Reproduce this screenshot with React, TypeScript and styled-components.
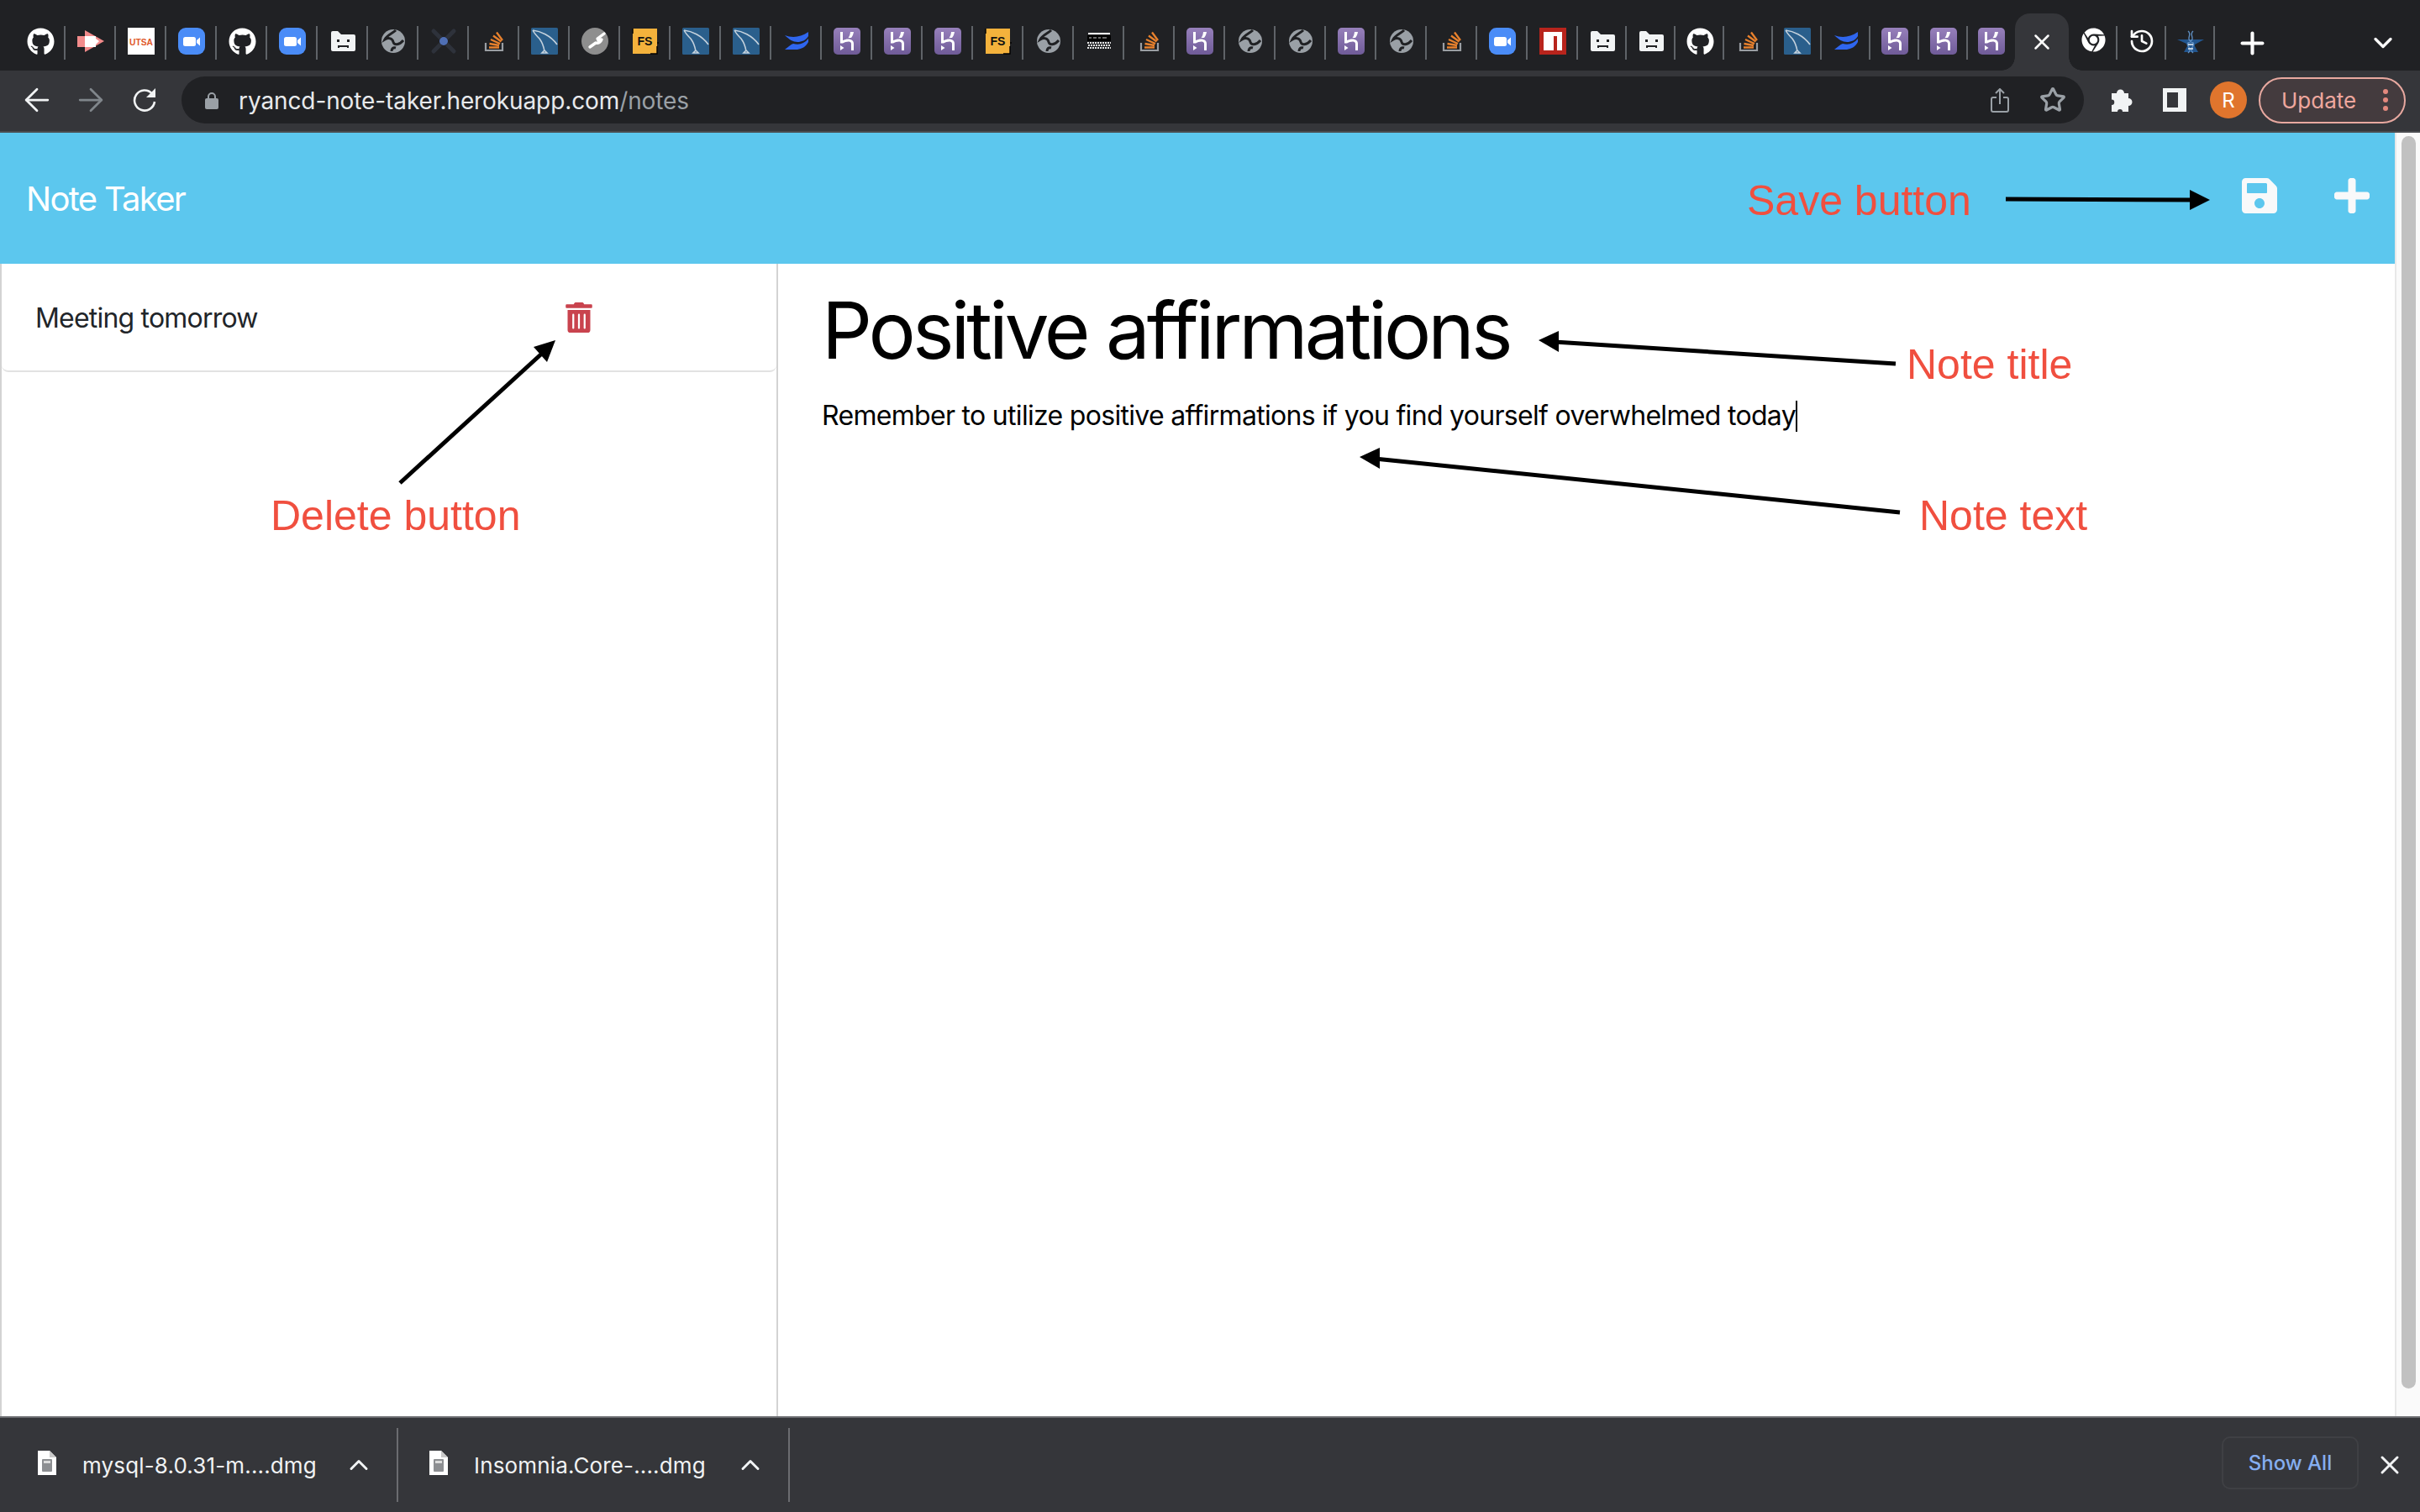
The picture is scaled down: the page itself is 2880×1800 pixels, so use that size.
import React from "react";
import styled, { createGlobalStyle } from "styled-components";
import { ArrowLeft, ArrowRight, ChevronDown, ChevronUp, History, Plus, Star, X } from "lucide-react";
import { FaChrome, FaGithub, FaPlus, FaSave, FaTrashAlt } from "react-icons/fa";

const GlobalStyle = createGlobalStyle`
  html, body {
    margin: 0;
    padding: 0;
    background: #fff;
  }
  body {
    font-family: Inter, "Liberation Sans", sans-serif;
    overflow: hidden;
  }
`;

const Fav = ({ children }: { children: React.ReactNode }) => (
  <svg width="32" height="32" viewBox="0 0 32 32">
    {children}
  </svg>
);

const Github = () => <FaGithub size={33} color="#fff" />;

const ArrowFav = () => (
  <Fav>
    <rect x="0" y="10" width="12" height="13" fill="#f28b8b" />
    <polygon points="9,3 32,16 9,29" fill="#f28b8b" />
    <rect x="9" y="10" width="13" height="13" fill="#fff" />
    <polygon points="22,13 26,16 22,20" fill="#fff" />
  </Fav>
);

const Utsa = () => (
  <Fav>
    <rect width="32" height="32" fill="#fff" />
    <text x="16" y="20.5" textAnchor="middle" fontFamily="Liberation Sans" fontWeight="700" fontSize="11.5" textLength="28" lengthAdjust="spacingAndGlyphs" fill="#e0592a">
      UTSA
    </text>
  </Fav>
);

const Zoom = () => (
  <Fav>
    <rect width="32" height="32" rx="9" fill="#4a8cf7" />
    <rect x="6" y="11" width="15" height="11" rx="2.5" fill="#fff" />
    <polygon points="22,15 26,11.5 26,21.5 22,18" fill="#fff" />
  </Fav>
);

const Sad = () => (
  <Fav>
    <path d="M2 6a2 2 0 0 1 2-2h6l4 4h15a2 2 0 0 1 2 2v16a2 2 0 0 1-2 2H4a2 2 0 0 1-2-2z" fill="#f1f3f4" />
    <rect x="9" y="14" width="3" height="3" fill="#202124" />
    <rect x="21" y="14" width="3" height="3" fill="#202124" />
    <path d="M11 24v-2h11v2" fill="none" stroke="#202124" strokeWidth="2" />
  </Fav>
);

const Globe = () => (
  <Fav>
    <circle cx="16" cy="16" r="14" fill="#9aa0a6" />
    <path d="M19 3C15 7 9 8 6 14c5-3 9-1 10 3 1 4 7 4 12-2M14 28c0-3 2-5 5-4" fill="none" stroke="#202124" strokeWidth="3" />
  </Fav>
);

const XDot = () => (
  <Fav>
    <path d="M4 4L28 28M28 4L4 28" stroke="#2e323b" strokeWidth="5" strokeLinecap="round" />
    <circle cx="16" cy="16" r="5.5" fill="#202124" />
    <circle cx="16" cy="16" r="5" fill="#4f6fb5" />
  </Fav>
);

const Stack = () => (
  <Fav>
    <path d="M6 19v9h20v-9" transform="translate(0 -1)" fill="none" stroke="#9a9ea3" strokeWidth="2.2" />
    <path d="M10 23.5h12M10.5 19l11.5 2M12 14l11 5M15 9.5l9.5 7M19 5.5l7 9.5" stroke="#e8812d" strokeWidth="2.3" fill="none" />
  </Fav>
);

const Mysql = () => (
  <Fav>
    <rect width="32" height="32" rx="1.5" fill="#2a5f8c" />
    <path d="M2 3c9 1 21 6 29 17M2 3c2 4 6 8 8 10 3 4 5 9 6 15M16 27l3 3h-6z" fill="none" stroke="#c5d2dd" strokeWidth="1.6" />
  </Fav>
);

const Wrench = () => (
  <Fav>
    <circle cx="16" cy="16" r="16" fill="#8e8e8e" />
    <path d="M10 23l7-5c3 1 6-1 7-4l-4 1-1-2 8-6" fill="none" stroke="#fff" strokeWidth="3.4" strokeLinecap="round" strokeLinejoin="round" />
  </Fav>
);

const Fs = () => (
  <Fav>
    <rect x="1" y="1" width="29" height="30" fill="#f4b23c" />
    <path d="M1 1v6M31 17v2M30 22v9h-8" stroke="#000" strokeWidth="1.4" fill="none" />
    <text x="15.5" y="21" textAnchor="middle" fontFamily="Liberation Sans" fontWeight="700" fontSize="14" fill="#111">
      FS
    </text>
  </Fav>
);

const Wave = () => (
  <Fav>
    <path d="M2 9c8 3 18 3 28-4v5c-3 5-8 7-13 7-5 0-10-3-15-8z" fill="#2f66ef" />
    <path d="M30 13v4c-3 6-8 8-13 9H2c4-3 7-6 10-7 7 2 13 0 18-6z" fill="#2f66ef" />
  </Fav>
);

const Heroku = () => (
  <Fav>
    <defs>
      <linearGradient id="her" x1="0" y1="0" x2="0" y2="1">
        <stop offset="0" stopColor="#9780bb" />
        <stop offset="1" stopColor="#6f5b98" />
      </linearGradient>
    </defs>
    <rect width="32" height="32" rx="5" fill="url(#her)" />
    <path d="M8 5h3v10c3-1 6-2 9-1 3 .5 4 3 4 5v8h-3v-8c0-1-.5-2-2-2.300-2.500-.4-6 .8-8 1.800H8z" fill="#fff" />
    <path d="M20 5h4c-.5 3-1.500 5-3 7h-3.500c1.500-2 2.200-4 2.500-7z" fill="#fff" />
    <path d="M8 21l4.500 3L8 27z" fill="#fff" />
  </Fav>
);

const Pixel = () => (
  <Fav>
    <rect x="3" y="6" width="26" height="2" fill="#fff" />
    <rect x="2" y="9" width="28" height="7" fill="#000" />
    <path d="M4 12h3M9 12h4M15 12h3M20 12h5" stroke="#888" strokeWidth="1.5" />
    <path d="M2 18h28M3 21h26M2 24h28" stroke="#e6e6e6" strokeWidth="2" strokeDasharray="2 1" />
  </Fav>
);

const Npm = () => (
  <Fav>
    <rect width="32" height="32" fill="#b8241c" />
    <rect x="5" y="5" width="22" height="22" fill="#fff" />
    <rect x="11" y="9" width="12" height="18" fill="#fff" />
    <rect x="17" y="10" width="4" height="17" fill="#b8241c" />
    <rect x="5" y="5" width="22" height="3" fill="#fff" />
  </Fav>
);

const Anvil = () => (
  <Fav>
    <polygon points="0,14 32,14 21,20 21,22 25,29 8,29 12,22 11,19" fill="#23568f" />
    <path d="M13 4c6 5-5 9 6 14 3 3-6 7 0 12M19 4c-6 5 5 9-6 14-3 3 6 7 0 12" fill="none" stroke="#5f8fc2" strokeWidth="1.4" />
    <path d="M13 20h6M13 25h6" stroke="#e6eef6" strokeWidth="1.4" />
  </Fav>
);

type TabDef = { icon: React.ComponentType; width: number; sep?: boolean };

const wide = (icon: React.ComponentType): TabDef => ({ icon, width: 60, sep: true });
const slim = (icon: React.ComponentType): TabDef => ({ icon, width: 58, sep: true });

const leftTabs: TabDef[] = [
  wide(Github), wide(ArrowFav), wide(Utsa), wide(Zoom), wide(Github), wide(Zoom), wide(Sad), wide(Globe),
  wide(XDot), wide(Stack), wide(Mysql), wide(Wrench), wide(Fs), wide(Mysql), wide(Mysql), wide(Wave),
  wide(Heroku), wide(Heroku), wide(Heroku), wide(Fs), wide(Globe), wide(Pixel), wide(Stack), wide(Heroku),
  wide(Globe), wide(Globe), wide(Heroku), wide(Globe), wide(Stack), wide(Zoom), wide(Npm),
  slim(Sad), slim(Sad), slim(Github), slim(Stack), slim(Mysql), slim(Wave), slim(Heroku), slim(Heroku),
  { icon: Heroku, width: 56 },
];

const ChromeFav = () => <FaChrome size={29} color="#fff" />;
const HistoryFav = () => <History size={32} color="#fff" strokeWidth={2} />;

const rightTabs: TabDef[] = [slim(ChromeFav), slim(HistoryFav), slim(Anvil)];

const App = () => {
  return (
    <Frame>
      <GlobalStyle />
      <TabStrip>
        {leftTabs.map((t, i) => (
          <Tab key={i} $width={t.width} $sep={!!t.sep}>
            <t.icon />
          </Tab>
        ))}
        <ActiveTab>
          <X size={30} color="#fff" strokeWidth={2} />
        </ActiveTab>
        {rightTabs.map((t, i) => (
          <Tab key={i} $width={t.width} $sep={!!t.sep}>
            <t.icon />
          </Tab>
        ))}
        <NewTab>
          <Plus size={41} color="#fff" strokeWidth={2.4} />
        </NewTab>
        <TabMenu>
          <ChevronDown size={36} color="#fff" strokeWidth={2.2} />
        </TabMenu>
      </TabStrip>

      <Toolbar>
        <ToolButton>
          <ArrowLeft size={44} color="#f1f3f4" strokeWidth={1.5} />
        </ToolButton>
        <ToolButton>
          <ArrowRight size={44} color="#80868b" strokeWidth={1.5} />
        </ToolButton>
        <ToolButton>
          <svg width="28" height="28" viewBox="0 0 28 28">
            <path d="M23 6.500A12 12 0 1 0 26 16" fill="none" stroke="#f1f3f4" strokeWidth="2.600" />
            <polygon points="27,0 27,11 16,11" fill="#f1f3f4" />
          </svg>
        </ToolButton>
        <Omnibox>
          <svg width="16" height="21" viewBox="0 0 16 21">
            <path d="M4 9V6a4 4 0 0 1 8 0v3" fill="none" stroke="#9aa0a6" strokeWidth="2" />
            <rect y="8" width="16" height="13" rx="2" fill="#9aa0a6" />
          </svg>
          <Url>
            ryancd-note-taker.herokuapp.com<UrlPath>/notes</UrlPath>
          </Url>
          <OmniActions>
            <svg width="22" height="29" viewBox="0 0 22 29">
              <path d="M7 11H3a2 2 0 0 0-2 2v13a2 2 0 0 0 2 2h16a2 2 0 0 0 2-2V13a2 2 0 0 0-2-2h-4M11 19V2M6 6l5-5 5 5" fill="none" stroke="#9aa0a6" strokeWidth="2" />
            </svg>
            <Star size={32} color="#9aa0a6" strokeWidth={2.4} />
          </OmniActions>
        </Omnibox>
        <ToolButton>
          <svg width="29" height="29" viewBox="0 0 29 29">
            <path d="M3 6h6a4.500 4.500 0 0 1 9 0h5v6a4.500 4.500 0 0 1 0 9v7h-7a3 3 0 0 0-6 0H3v-8a3.200 3.200 0 0 0 0-6.500z" fill="#f1f3f4" />
          </svg>
        </ToolButton>
        <ToolButton>
          <svg width="28" height="28" viewBox="0 0 28 28">
            <rect width="28" height="28" fill="#f1f3f4" />
            <rect x="5" y="5" width="13" height="18" fill="#35363a" />
          </svg>
        </ToolButton>
        <ToolButton>
          <Avatar>R</Avatar>
        </ToolButton>
        <UpdatePill>
          Update
          <UpdateDots>
            <i />
            <i />
            <i />
          </UpdateDots>
        </UpdatePill>
      </Toolbar>

      <Viewport>
        <Page>
          <Navbar>
            <Brand>Note Taker</Brand>
            <NavIcons>
              <FaSave size={48} />
              <FaPlus size={48} />
            </NavIcons>
          </Navbar>
          <Columns>
            <Sidebar>
              <NoteCard>
                <NoteName>Meeting tomorrow</NoteName>
                <FaTrashAlt size={36} color="#c9434e" />
              </NoteCard>
            </Sidebar>
            <Editor>
              <NoteTitle>Positive affirmations</NoteTitle>
              <NoteText>
                Remember to utilize positive affirmations if you find yourself overwhelmed today
                <Caret />
              </NoteText>
            </Editor>
          </Columns>
        </Page>
        <Scrollbar>
          <Thumb />
        </Scrollbar>
      </Viewport>

      <DownloadBar>
        <DownloadItem>
          <FileIcon />
          <FileName>mysql-8.0.31-m....dmg</FileName>
          <ChevronUp size={36} color="#f1f3f4" strokeWidth={2} />
        </DownloadItem>
        <DownloadItem>
          <FileIcon />
          <FileName>Insomnia.Core-....dmg</FileName>
          <ChevronUp size={36} color="#f1f3f4" strokeWidth={2} />
        </DownloadItem>
        <ShowAll>Show All</ShowAll>
        <CloseBar>
          <X size={36} color="#f1f3f4" strokeWidth={2} />
        </CloseBar>
      </DownloadBar>

      <Arrows viewBox="0 0 2880 1800">
        <path d="M2387 237L2610 238" stroke="#000" strokeWidth="5" />
        <polygon points="2630,238 2606,226 2606,250" fill="#000" />
        <path d="M476 575L648 418" stroke="#000" strokeWidth="5" />
        <polygon points="661,405 635,413 651,431" fill="#000" />
        <path d="M2256 433L1850 407" stroke="#000" strokeWidth="5" />
        <polygon points="1831,405 1855,394 1855,419" fill="#000" />
        <path d="M2261 610L1636 546" stroke="#000" strokeWidth="5" />
        <polygon points="1618,544 1642,533 1642,558" fill="#000" />
      </Arrows>
      <Callout $x={2079} $y={214}>Save button</Callout>
      <Callout $x={2269} $y={409}>Note title</Callout>
      <Callout $x={2284} $y={589}>Note text</Callout>
      <Callout $x={322} $y={589}>Delete button</Callout>
    </Frame>
  );
};

const FileIcon = () => (
  <FileGlyph width="22" height="29" viewBox="0 0 22 29">
    <path d="M0 0h14l8 8v21H0z" fill="#fff" />
    <path d="M14 0v8h8z" fill="#c9c9c9" />
    <rect x="5" y="10" width="12" height="15" rx="1" fill="#8d8f92" />
    <rect x="7" y="12" width="8" height="3" fill="#dcdcdc" />
  </FileGlyph>
);

const Frame = styled.div`
  position: relative;
  width: 2880px;
  height: 1800px;
  display: flex;
  flex-direction: column;
  overflow: hidden;
`;

const TabStrip = styled.div`
  height: 84px;
  flex: none;
  box-sizing: border-box;
  padding: 31px 0 0 18px;
  display: flex;
  align-items: flex-start;
  background: #202124;
`;

const Tab = styled.div<{ $width: number; $sep: boolean }>`
  width: ${(p) => p.$width}px;
  height: 40px;
  flex: none;
  box-sizing: border-box;
  padding: 2px 0 0 2px;
  display: flex;
  justify-content: center;
  align-items: flex-start;
  border-right: 2px solid ${(p) => (p.$sep ? "#5f6368" : "transparent")};
`;

const ActiveTab = styled.div`
  position: relative;
  width: 64px;
  height: 68px;
  margin-top: -15px;
  flex: none;
  display: flex;
  justify-content: center;
  padding-top: 19px;
  box-sizing: border-box;
  background: #35363a;
  border-radius: 18px 18px 0 0;

  &::before,
  &::after {
    content: "";
    position: absolute;
    bottom: 0;
    width: 16px;
    height: 16px;
  }
  &::before {
    left: -16px;
    background: radial-gradient(circle at 0 0, transparent 15.500px, #35363a 16px);
  }
  &::after {
    right: -16px;
    background: radial-gradient(circle at 100% 0, transparent 15.500px, #35363a 16px);
  }
`;

const NewTab = styled.div`
  width: 88px;
  height: 40px;
  flex: none;
  display: flex;
  justify-content: center;
  align-items: center;
`;

const TabMenu = styled.div`
  margin-left: auto;
  margin-right: 26px;
  height: 40px;
  display: flex;
  align-items: center;
`;

const Toolbar = styled.div`
  height: 74px;
  flex: none;
  box-sizing: border-box;
  padding: 0 17px 2px 12px;
  display: flex;
  align-items: center;
  background: #35363a;
  border-bottom: 2px solid #4b4c50;
`;

const ToolButton = styled.div`
  width: 64px;
  height: 56px;
  flex: none;
  display: flex;
  justify-content: center;
  align-items: center;
`;

const Omnibox = styled.div`
  flex: 1;
  height: 56px;
  margin: 0 12px;
  box-sizing: border-box;
  padding: 0 21px 0 28px;
  display: flex;
  align-items: center;
  border-radius: 28px;
  background: #202124;
`;

const Url = styled.div`
  margin-left: 24px;
  padding-top: 2px;
  font-size: 28px;
  letter-spacing: -0.1px;
  color: #e8eaed;
`;

const UrlPath = styled.span`
  color: #9aa0a6;
`;

const OmniActions = styled.div`
  margin-left: auto;
  display: flex;
  align-items: center;
  gap: 36px;
`;

const Avatar = styled.div`
  width: 44px;
  height: 44px;
  border-radius: 50%;
  display: flex;
  justify-content: center;
  align-items: center;
  background: #e0752d;
  color: #fff;
  font-size: 24px;
`;

const UpdatePill = styled.div`
  width: 175px;
  height: 55px;
  margin-left: 4px;
  box-sizing: border-box;
  padding-left: 25px;
  display: flex;
  align-items: center;
  border: 2px solid #e8a9a0;
  border-radius: 28px;
  background: #443b3e;
  color: #efa79e;
  font-size: 26px;
`;

const UpdateDots = styled.div`
  margin-left: 32px;
  display: flex;
  flex-direction: column;
  gap: 4px;

  i {
    width: 6px;
    height: 6px;
    border-radius: 50%;
    background: #e4897e;
  }
`;

const Viewport = styled.div`
  flex: 1;
  min-height: 0;
  display: flex;
`;

const Page = styled.div`
  flex: 1;
  display: flex;
  flex-direction: column;
  background: #fff;
`;

const Navbar = styled.div`
  height: 156px;
  flex: none;
  box-sizing: border-box;
  padding: 0 27px 0 31px;
  display: flex;
  justify-content: space-between;
  align-items: center;
  background: #5cc7ee;
`;

const Brand = styled.div`
  font-size: 40px;
  letter-spacing: -1.7px;
  color: #fff;
`;

const NavIcons = styled.div`
  display: flex;
  gap: 62px;
  padding-bottom: 6px;
  color: #f8f9fa;
`;

const Columns = styled.div`
  flex: 1;
  display: flex;
`;

const Sidebar = styled.div`
  width: 926px;
  flex: none;
  box-sizing: border-box;
  border-left: 2px solid #d3d3d3;
  border-right: 2px solid #d3d3d3;
`;

const NoteCard = styled.div`
  height: 129px;
  box-sizing: border-box;
  padding-left: 40px;
  display: flex;
  align-items: center;
  border-bottom: 2px solid #e2e2e2;
  border-radius: 0 0 8px 8px;
`;

const NoteName = styled.div`
  width: 629px;
  padding-top: 2px;
  font-size: 32px;
  letter-spacing: -0.8px;
  color: #212529;
`;

const Editor = styled.div`
  flex: 1;
  padding: 23px 0 0 52px;
`;

const NoteTitle = styled.h1`
  margin: 0 0 21px;
  font-size: 94px;
  font-weight: 400;
  line-height: 113px;
  letter-spacing: -4px;
  color: #000;
`;

const NoteText = styled.div`
  font-size: 32px;
  line-height: 48px;
  letter-spacing: -0.69px;
  color: #000;
`;

const Caret = styled.span`
  display: inline-block;
  width: 2px;
  height: 37px;
  vertical-align: -8px;
  background: #000;
`;

const Scrollbar = styled.div`
  width: 30px;
  flex: none;
  box-sizing: border-box;
  padding: 4px 5px 0 6px;
  background: #fafafa;
  border-left: 2px solid #e8e8e8;
`;

const Thumb = styled.div`
  height: 1491px;
  border-radius: 9px;
  background: #c1c1c1;
`;

const DownloadBar = styled.div`
  height: 114px;
  flex: none;
  box-sizing: border-box;
  padding-left: 8px;
  display: flex;
  align-items: center;
  background: #35363a;
  border-top: 2px solid #6b6c70;
`;

const DownloadItem = styled.div`
  width: 466px;
  height: 88px;
  flex: none;
  box-sizing: border-box;
  padding: 0 27px 0 37px;
  display: flex;
  align-items: center;
  border-right: 2px solid #6b6c70;
`;

const FileGlyph = styled.svg`
  flex: none;
  margin: -6px 31px 0 0;
`;

const FileName = styled.div`
  flex: 1;
  font-size: 26px;
  letter-spacing: 0.15px;
  color: #f1f3f4;
  white-space: nowrap;
`;

const ShowAll = styled.div`
  width: 163px;
  height: 63px;
  margin: 0 0 5px auto;
  box-sizing: border-box;
  display: flex;
  justify-content: center;
  align-items: center;
  border: 2px solid #3f4044;
  border-radius: 10px;
  color: #85aef0;
  font-size: 24px;
  font-weight: 500;
`;

const CloseBar = styled.div`
  margin: 0 18px 0 19px;
  display: flex;
`;

const Arrows = styled.svg`
  position: absolute;
  inset: 0;
  width: 2880px;
  height: 1800px;
  pointer-events: none;
`;

const Callout = styled.div<{ $x: number; $y: number }>`
  position: absolute;
  left: ${(p) => p.$x}px;
  top: ${(p) => p.$y}px;
  font-family: "Liberation Sans", Arial, sans-serif;
  font-size: 50px;
  line-height: 1;
  color: #f04f3f;
  white-space: nowrap;
`;

export default App;
